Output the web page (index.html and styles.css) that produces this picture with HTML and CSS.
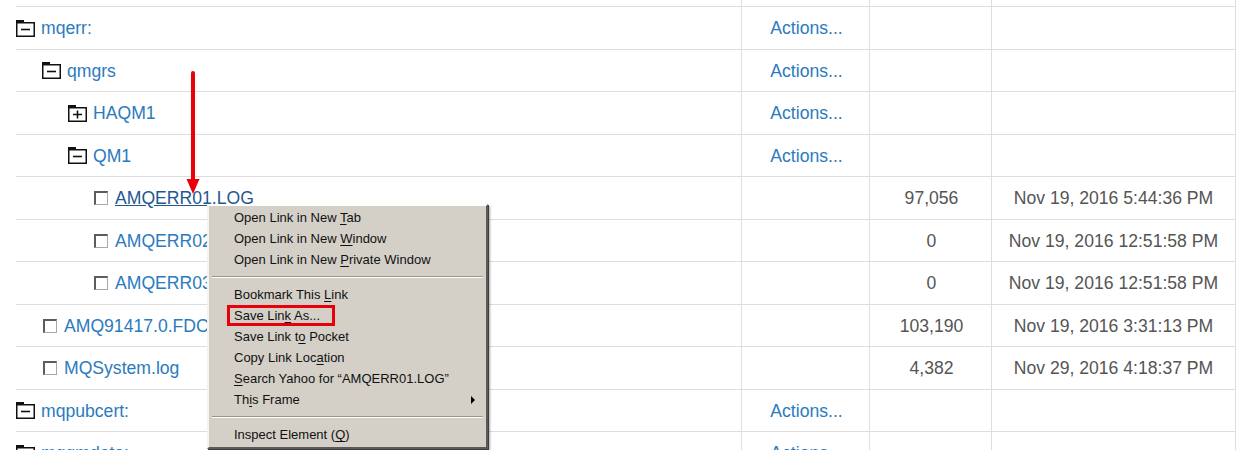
FILE: index.html
```html
<!DOCTYPE html>
<html>
<head>
<meta charset="utf-8">
<link rel="stylesheet" href="styles.css">
</head>
<body>
<div class="page">
  <div class="grid">
    <div class="row row-cut"><div class="c name"></div><div class="c act"></div><div class="c size"></div><div class="c date"></div></div>

    <div class="row"><div class="c name l0"><svg class="fold" viewBox="0 0 19 17"><rect x="0" y="0" width="8" height="2.5" fill="#111"/><rect x="0.75" y="2.75" width="17.5" height="13.5" fill="#fff" stroke="#111" stroke-width="1.5"/><path d="M5 9.5h9" stroke="#111" stroke-width="1.6"/></svg><a class="lnk">mqerr:</a></div><div class="c act"><a class="lnk">Actions...</a></div><div class="c size"></div><div class="c date"></div></div>

    <div class="row"><div class="c name l1"><svg class="fold" viewBox="0 0 19 17"><rect x="0" y="0" width="8" height="2.5" fill="#111"/><rect x="0.75" y="2.75" width="17.5" height="13.5" fill="#fff" stroke="#111" stroke-width="1.5"/><path d="M5 9.5h9" stroke="#111" stroke-width="1.6"/></svg><a class="lnk">qmgrs</a></div><div class="c act"><a class="lnk">Actions...</a></div><div class="c size"></div><div class="c date"></div></div>

    <div class="row"><div class="c name l2"><svg class="fold" viewBox="0 0 19 17"><rect x="0" y="0" width="8" height="2.5" fill="#111"/><rect x="0.75" y="2.75" width="17.5" height="13.5" fill="#fff" stroke="#111" stroke-width="1.5"/><path d="M5 9.5h9M9.5 5.5v8" stroke="#111" stroke-width="1.6"/></svg><a class="lnk">HAQM1</a></div><div class="c act"><a class="lnk">Actions...</a></div><div class="c size"></div><div class="c date"></div></div>

    <div class="row"><div class="c name l2"><svg class="fold" viewBox="0 0 19 17"><rect x="0" y="0" width="8" height="2.5" fill="#111"/><rect x="0.75" y="2.75" width="17.5" height="13.5" fill="#fff" stroke="#111" stroke-width="1.5"/><path d="M5 9.5h9" stroke="#111" stroke-width="1.6"/></svg><a class="lnk">QM1</a></div><div class="c act"><a class="lnk">Actions...</a></div><div class="c size"></div><div class="c date"></div></div>

    <div class="row"><div class="c name l3"><span class="chk"></span><a class="lnk visited">AMQERR01.LOG</a></div><div class="c act"></div><div class="c size">97,056</div><div class="c date">Nov 19, 2016 5:44:36 PM</div></div>

    <div class="row"><div class="c name l3"><span class="chk"></span><a class="lnk">AMQERR02.LOG</a></div><div class="c act"></div><div class="c size">0</div><div class="c date">Nov 19, 2016 12:51:58 PM</div></div>

    <div class="row"><div class="c name l3"><span class="chk"></span><a class="lnk">AMQERR03.LOG</a></div><div class="c act"></div><div class="c size">0</div><div class="c date">Nov 19, 2016 12:51:58 PM</div></div>

    <div class="row"><div class="c name l1f"><span class="chk"></span><a class="lnk">AMQ91417.0.FDC</a></div><div class="c act"></div><div class="c size">103,190</div><div class="c date">Nov 19, 2016 3:31:13 PM</div></div>

    <div class="row"><div class="c name l1f"><span class="chk"></span><a class="lnk">MQSystem.log</a></div><div class="c act"></div><div class="c size">4,382</div><div class="c date">Nov 29, 2016 4:18:37 PM</div></div>

    <div class="row"><div class="c name l0"><svg class="fold" viewBox="0 0 19 17"><rect x="0" y="0" width="8" height="2.5" fill="#111"/><rect x="0.75" y="2.75" width="17.5" height="13.5" fill="#fff" stroke="#111" stroke-width="1.5"/><path d="M5 9.5h9" stroke="#111" stroke-width="1.6"/></svg><a class="lnk">mqpubcert:</a></div><div class="c act"><a class="lnk">Actions...</a></div><div class="c size"></div><div class="c date"></div></div>

    <div class="row"><div class="c name l0"><svg class="fold" viewBox="0 0 19 17"><rect x="0" y="0" width="8" height="2.5" fill="#111"/><rect x="0.75" y="2.75" width="17.5" height="13.5" fill="#fff" stroke="#111" stroke-width="1.5"/><path d="M5 9.5h9" stroke="#111" stroke-width="1.6"/></svg><a class="lnk">mqqmdata:</a></div><div class="c act"><a class="lnk">Actions...</a></div><div class="c size"></div><div class="c date"></div></div>
  </div>

  <svg class="arrow" viewBox="0 0 16 130" width="16" height="130"><path d="M8 3V112" stroke="#e8000b" stroke-width="4" stroke-linecap="round"/><path d="M1.5 109H14.5L8 124Z" fill="#e8000b"/></svg>

  <div class="menu">
    <div class="mi">Open Link in New <u>T</u>ab</div>
    <div class="mi">Open Link in New <u>W</u>indow</div>
    <div class="mi">Open Link in New <u>P</u>rivate Window</div>
    <div class="sep"></div>
    <div class="mi">Bookmark This <u>L</u>ink</div>
    <div class="mi hl">Save Lin<u>k</u> As...</div>
    <div class="mi">Save Link t<u>o</u> Pocket</div>
    <div class="mi">Copy Link Loc<u>a</u>tion</div>
    <div class="mi"><u>S</u>earch Yahoo for “AMQERR01.LOG”</div>
    <div class="mi sub">Th<u>i</u>s Frame</div>
    <div class="sep"></div>
    <div class="mi">Inspect Element (<u>Q</u>)</div>
  </div>
</div>
</body>
</html>
```
FILE: styles.css
```css
html, body {
  margin: 0;
  padding: 0;
  background: #fff;
  overflow: hidden;
}
.page {
  position: relative;
  width: 1238px;
  height: 450px;
  overflow: hidden;
  font-family: "Liberation Sans", Arial, sans-serif;
  font-size: 17.6px;
}
.grid {
  margin-left: 16px;
  width: 1220px;
}
.row {
  display: grid;
  grid-template-columns: 725px 128px 122px 245px;
  height: 42.5px;
  box-sizing: border-box;
  border-bottom: 1px solid #dedede;
}
.row-cut {
  height: 7px;
}
.c {
  display: flex;
  align-items: center;
  box-sizing: border-box;
  white-space: nowrap;
  padding-top: 2px;
}
.row-cut .c {
  padding-top: 0;
}
.act, .size, .date {
  border-left: 1px solid #dedede;
  justify-content: center;
  color: #555;
}
.date {
  border-right: 1px solid #dedede;
}
.act {
  padding-left: 2px;
}
.size {
  padding-left: 2px;
}
.l0 { padding-left: 0; }
.l1 { padding-left: 26px; }
.l2 { padding-left: 52px; }
.l3 { padding-left: 78px; }
.l1f { padding-left: 27px; }
.fold {
  width: 19px;
  height: 17px;
  margin-right: 6px;
  margin-top: -1px;
  flex: none;
}
.chk {
  width: 14px;
  height: 14px;
  box-sizing: border-box;
  border-style: solid;
  border-width: 2px 1px 1px 2px;
  border-color: #5c5c5c #a8a8a8 #a8a8a8 #5c5c5c;
  background: #fff;
  margin-right: 7px;
  margin-top: -1px;
  flex: none;
}
.lnk {
  color: #2b7bbd;
  text-decoration: none;
}
.lnk.visited {
  color: #1f5891;
  text-decoration: underline;
}
.arrow {
  position: absolute;
  left: 185px;
  top: 70px;
}
.menu {
  position: absolute;
  left: 207px;
  top: 204px;
  width: 281px;
  box-sizing: border-box;
  background: #d4d0c8;
  border-style: solid;
  border-width: 2px;
  border-color: #fff #5a5a5a #5a5a5a #f4f3ef;
  padding: 1px 0 2px;
  box-shadow: 1px 1px 0 #404040, 2px 2px 2px rgba(0,0,0,0.35);
  font-family: "Liberation Sans", Tahoma, sans-serif;
  font-size: 13px;
  color: #111;
}
.mi {
  position: relative;
  height: 21px;
  line-height: 21px;
  padding-left: 25px;
  white-space: nowrap;
}
.mi u {
  text-decoration: underline;
  text-underline-offset: 2px;
}
.hl::after {
  content: "";
  position: absolute;
  left: 18px;
  top: 0;
  width: 108px;
  height: 21px;
  box-sizing: border-box;
  border: 3px solid #e8000b;
}
.sub::after {
  content: "";
  position: absolute;
  right: 11px;
  top: 7px;
  border-style: solid;
  border-width: 4px 0 4px 4px;
  border-color: transparent transparent transparent #000;
}
.sep {
  height: 14px;
  position: relative;
}
.sep::before {
  content: "";
  position: absolute;
  left: 3px;
  right: 3px;
  top: 6px;
  height: 1px;
  background: #9a968e;
  border-bottom: 1px solid #fff;
}
```
